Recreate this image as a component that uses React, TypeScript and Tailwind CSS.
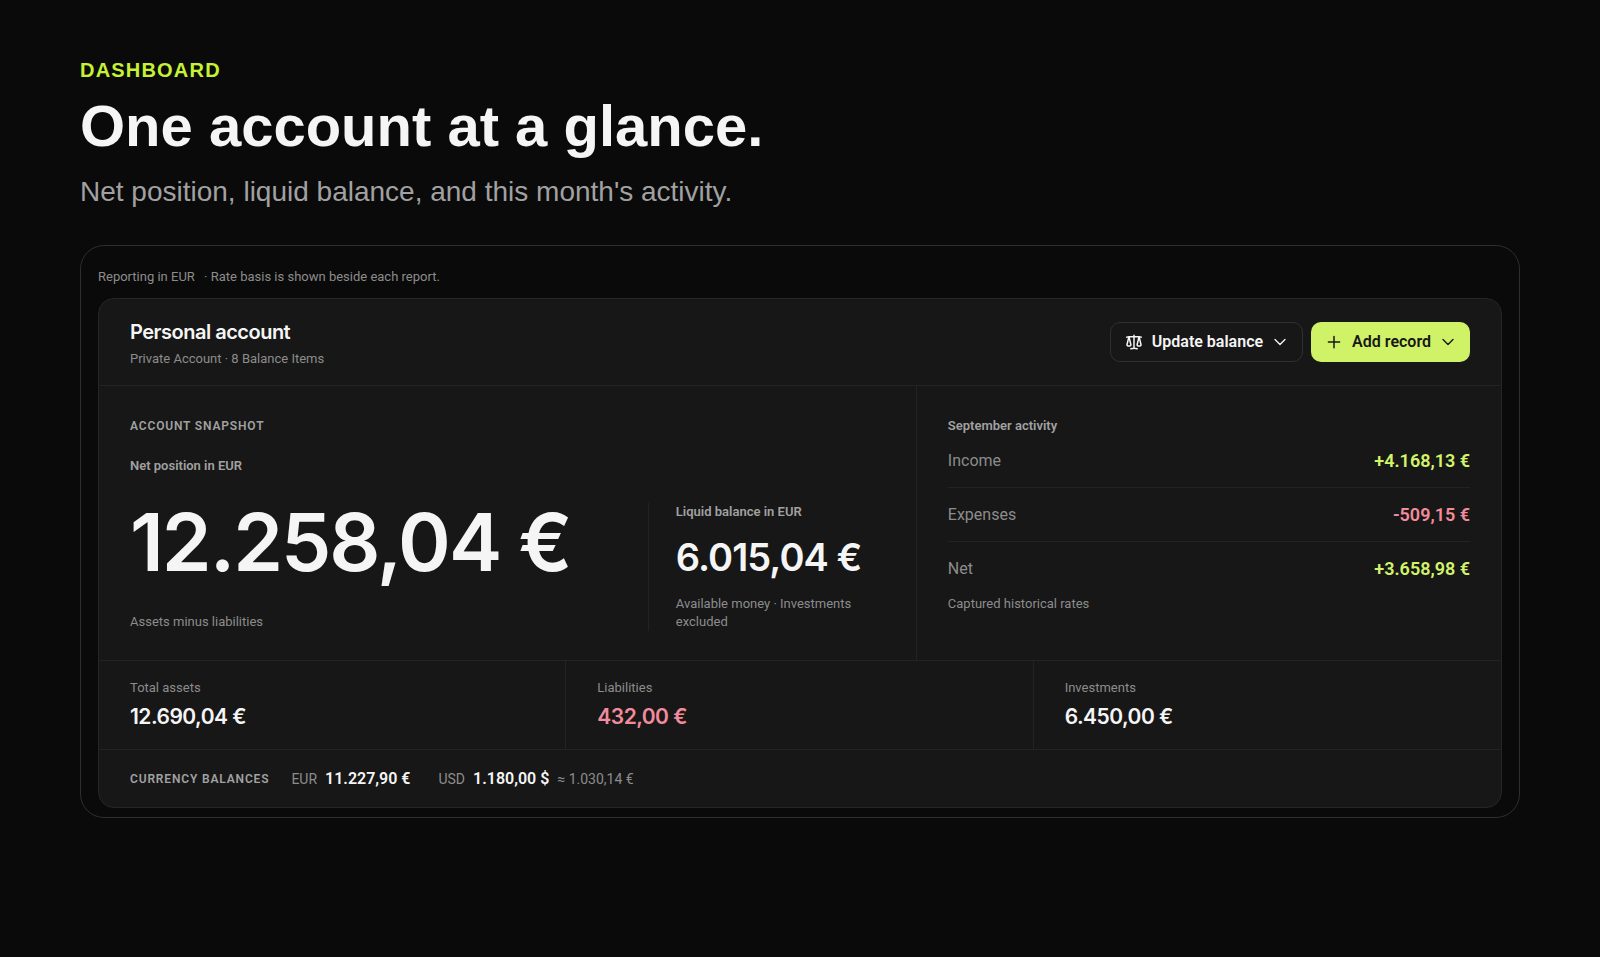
import React from "react";
import {
  HiOutlineChevronDown,
  HiOutlinePlus,
  HiOutlineScale,
} from "react-icons/hi2";

type Tone = "positive" | "negative" | "neutral";

const toneClass: Record<Tone, string> = {
  positive: "text-[#d3f36b]",
  negative: "text-[#f28b9b]",
  neutral: "text-[#f5f5f5]",
};

const activity: { label: string; value: string; tone: Tone }[] = [
  { label: "Income", value: "+4.168,13 €", tone: "positive" },
  { label: "Expenses", value: "-509,15 €", tone: "negative" },
  { label: "Net", value: "+3.658,98 €", tone: "positive" },
];

const totals: { label: string; value: string; tone: Tone }[] = [
  { label: "Total assets", value: "12.690,04 €", tone: "neutral" },
  { label: "Liabilities", value: "432,00 €", tone: "negative" },
  { label: "Investments", value: "6.450,00 €", tone: "neutral" },
];

function PageHeading() {
  return (
    <header className="font-['Liberation_Sans',Arial,sans-serif]">
      <p className="text-xl leading-6 font-bold tracking-[0.06em] text-[#c6f135]">
        DASHBOARD
      </p>
      <h1 className="mt-2 text-[58px] leading-[72px] font-bold text-[#f5f5f5]">
        One account at a glance.
      </h1>
      <p className="mt-3.5 text-[28px] leading-8 text-[#a1a1a1]">
        Net position, liquid balance, and this month's activity.
      </p>
    </header>
  );
}

function AccountHeader() {
  return (
    <div className="flex items-center justify-between border-b border-[#232323] px-[31px] py-[17px]">
      <div className="pt-0.5">
        <h2 className="font-[Inter,sans-serif] text-xl leading-7 font-semibold tracking-tight text-[#f5f5f5]">
          Personal account
        </h2>
        <p className="mt-1 text-[13px] leading-[18px] text-[#8c8c8c]">
          Private Account · 8 Balance Items
        </p>
      </div>
      <div className="flex gap-2">
        <button
          type="button"
          className="flex h-10 items-center gap-[9px] rounded-[10px] border border-[#303030] px-3.5 text-base font-semibold text-[#f5f5f5]"
        >
          <HiOutlineScale size={18} strokeWidth={2} />
          Update balance
          <HiOutlineChevronDown size={16} strokeWidth={2} />
        </button>
        <button
          type="button"
          className="flex h-10 items-center gap-[9px] rounded-[10px] bg-[#d0f267] px-3.5 text-base font-semibold text-[#171717]"
        >
          <HiOutlinePlus size={18} strokeWidth={2} />
          Add record
          <HiOutlineChevronDown size={16} strokeWidth={2} />
        </button>
      </div>
    </div>
  );
}

function Snapshot() {
  return (
    <section className="border-r border-[#232323] px-[31px] pt-8 pb-[29px]">
      <h3 className="text-xs leading-4 font-semibold tracking-[0.07em] text-[#a1a1a1]">
        ACCOUNT SNAPSHOT
      </h3>
      <p className="mt-6 text-[13px] leading-4 font-semibold text-[#a1a1a1]">
        Net position in EUR
      </p>
      <div className="mt-[29px] flex">
        <div className="flex flex-1 flex-col justify-between">
          <p className="font-[Inter,sans-serif] text-[80px] leading-[78px] font-semibold tracking-tight whitespace-nowrap text-[#f5f5f5]">
            12.258,04 €
          </p>
          <p className="text-[13px] leading-[18px] text-[#8c8c8c]">
            Assets minus liabilities
          </p>
        </div>
        <div className="w-[237px] border-l border-[#232323] pl-[27px]">
          <p className="text-[13px] leading-[18px] font-semibold text-[#a1a1a1]">
            Liquid balance in EUR
          </p>
          <p className="mt-3 font-[Inter,sans-serif] text-[38px] leading-12 font-semibold tracking-tight whitespace-nowrap text-[#f5f5f5]">
            6.015,04 €
          </p>
          <p className="mt-3.5 text-[13px] leading-[18px] text-[#8c8c8c]">
            Available money · Investments excluded
          </p>
        </div>
      </div>
    </section>
  );
}

function Activity() {
  return (
    <section className="px-[31px] pt-8">
      <h3 className="text-[13px] leading-4 font-semibold text-[#a1a1a1]">
        September activity
      </h3>
      <dl className="divide-y divide-[#232323]">
        {activity.map((row) => (
          <div
            key={row.label}
            className="flex h-[54px] items-center justify-between"
          >
            <dt className="text-base text-[#8c8c8c]">{row.label}</dt>
            <dd className={`text-lg font-semibold ${toneClass[row.tone]}`}>
              {row.value}
            </dd>
          </div>
        ))}
      </dl>
      <p className="text-[13px] leading-4 text-[#8c8c8c]">
        Captured historical rates
      </p>
    </section>
  );
}

function Totals() {
  return (
    <dl className="grid grid-cols-3 divide-x divide-[#232323] border-y border-[#232323]">
      {totals.map((item) => (
        <div key={item.label} className="px-[31px] py-[18px]">
          <dt className="text-[13px] leading-[18px] text-[#8c8c8c]">
            {item.label}
          </dt>
          <dd
            className={`mt-1.5 font-[Inter,sans-serif] text-[21px] leading-7 font-semibold tracking-tight ${toneClass[item.tone]}`}
          >
            {item.value}
          </dd>
        </div>
      ))}
    </dl>
  );
}

function CurrencyBalances() {
  return (
    <div className="flex h-[57px] items-center px-[31px]">
      <h3 className="mr-[22px] text-xs font-semibold tracking-[0.07em] text-[#a1a1a1]">
        CURRENCY BALANCES
      </h3>
      <p className="mr-7 flex items-baseline gap-2">
        <span className="text-sm text-[#8c8c8c]">EUR</span>
        <span className="text-base font-semibold text-[#f5f5f5]">
          11.227,90 €
        </span>
      </p>
      <p className="flex items-baseline gap-2">
        <span className="text-sm text-[#8c8c8c]">USD</span>
        <span className="text-base font-semibold text-[#f5f5f5]">
          1.180,00 $
        </span>
        <span className="text-sm text-[#8c8c8c]">≈ 1.030,14 €</span>
      </p>
    </div>
  );
}

function App() {
  return (
    <main className="min-h-screen bg-[#0a0a0a] px-20 pt-[58px] pb-20 font-[Roboto,'Noto_Sans',sans-serif]">
      <PageHeading />
      <div className="mt-[37px] rounded-3xl border border-[#2e2e2e] px-[17px] pt-[22px] pb-[9px]">
        <p className="text-[13px] leading-[18px] text-[#8c8c8c]">
          Reporting in EUR <span className="ml-1.5">·</span> Rate basis is shown
          beside each report.
        </p>
        <article className="mt-3 rounded-2xl border border-[#262626] bg-[#171717]">
          <AccountHeader />
          <div className="grid grid-cols-[7fr_5fr]">
            <Snapshot />
            <Activity />
          </div>
          <Totals />
          <CurrencyBalances />
        </article>
      </div>
    </main>
  );
}

export default App;
